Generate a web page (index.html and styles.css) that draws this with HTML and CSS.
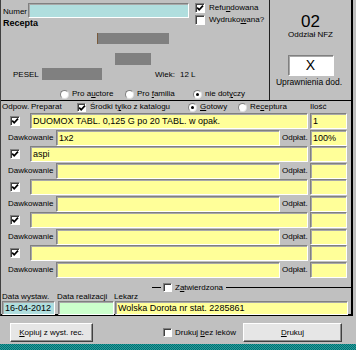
FILE: index.html
```html
<!DOCTYPE html>
<html lang="pl">
<head>
<meta charset="utf-8">
<title>Recepta</title>
<link rel="stylesheet" href="styles.css">
</head>
<body>
<div class="form">
  <div class="top">
    <div class="patient">
      <div class="numer-row"><span class="numer-lbl">Numer</span><span class="field cyan numer"></span></div>
      <div class="flags">
        <div class="cb-line"><span class="cb on"><svg viewBox="0 0 10 10"><path d="M2.2 4.6 L4.2 6.8 L8 2.6" /></svg></span><span>Refu<u>n</u>dowana</span></div>
        <div class="cb-line"><span class="cb"></span><span>Wydruko<u>w</u>ana?</span></div>
      </div>
      <div class="recepta">Recepta</div>
      <div class="redact r1"></div>
      <div class="redact r2"></div>
      <div class="pesel-row"><span class="pesel-lbl">PESEL</span><span class="redact r3"></span><span class="wiek">Wiek:</span><span class="wiek-val">12 L</span></div>
      <div class="radio-row">
        <span class="opt o1"><span class="rb"></span><span>Pro a<u>u</u>ctore</span></span>
        <span class="opt o2"><span class="rb"></span><span>Pro <u>f</u>amilia</span></span>
        <span class="opt o3"><span class="rb on"></span><span>nie dot<u>y</u>czy</span></span>
      </div>
    </div>
    <div class="nfz">
      <div class="nfz-num">02</div>
      <div class="nfz-lbl">Oddział NFZ</div>
      <div class="field white xbox">X</div>
      <div class="upr">Uprawnienia dod.</div>
    </div>
  </div>

  <div class="drug-head">
    <span class="h-odp">Odpow.</span>
    <span class="h-prep">Preparat</span>
    <span class="h-kat"><span class="cb on"><svg viewBox="0 0 10 10"><path d="M2.2 4.6 L4.2 6.8 L8 2.6" /></svg></span><span>Środki t<u>y</u>lko z katalogu</span></span>
    <span class="h-got"><span class="rb on"></span><span><u>G</u>otowy</span></span>
    <span class="h-rec"><span class="rb"></span><span>Re<u>c</u>eptura</span></span>
    <span class="h-il">Ilość</span>
  </div>

  <div class="drugs">
    <div class="pair">
      <div class="row-a"><span class="cbcell"><span class="cb on"><svg viewBox="0 0 10 10"><path d="M2.2 4.6 L4.2 6.8 L8 2.6" /></svg></span></span><span class="field yellow drug">DUOMOX TABL. 0,125 G po 20 TABL. w opak.</span><span class="field yellow qty">1</span></div>
      <div class="row-b"><span class="dlbl">Dawkowanie</span><span class="field yellow dawk">1x2</span><span class="odp">Odpłat.</span><span class="field yellow qty">100%</span></div>
    </div>
    <div class="pair">
      <div class="row-a"><span class="cbcell"><span class="cb on"><svg viewBox="0 0 10 10"><path d="M2.2 4.6 L4.2 6.8 L8 2.6" /></svg></span></span><span class="field yellow drug">aspi</span><span class="field yellow qty"></span></div>
      <div class="row-b"><span class="dlbl">Dawkowanie</span><span class="field yellow dawk"></span><span class="odp">Odpłat.</span><span class="field yellow qty"></span></div>
    </div>
    <div class="pair">
      <div class="row-a"><span class="cbcell"><span class="cb on"><svg viewBox="0 0 10 10"><path d="M2.2 4.6 L4.2 6.8 L8 2.6" /></svg></span></span><span class="field yellow drug"></span><span class="field yellow qty"></span></div>
      <div class="row-b"><span class="dlbl">Dawkowanie</span><span class="field yellow dawk"></span><span class="odp">Odpłat.</span><span class="field yellow qty"></span></div>
    </div>
    <div class="pair">
      <div class="row-a"><span class="cbcell"><span class="cb on"><svg viewBox="0 0 10 10"><path d="M2.2 4.6 L4.2 6.8 L8 2.6" /></svg></span></span><span class="field yellow drug"></span><span class="field yellow qty"></span></div>
      <div class="row-b"><span class="dlbl">Dawkowanie</span><span class="field yellow dawk"></span><span class="odp">Odpłat.</span><span class="field yellow qty"></span></div>
    </div>
    <div class="pair">
      <div class="row-a"><span class="cbcell"><span class="cb on"><svg viewBox="0 0 10 10"><path d="M2.2 4.6 L4.2 6.8 L8 2.6" /></svg></span></span><span class="field yellow drug"></span><span class="field yellow qty"></span></div>
      <div class="row-b"><span class="dlbl">Dawkowanie</span><span class="field yellow dawk"></span><span class="odp">Odpłat.</span><span class="field yellow qty"></span></div>
    </div>
  </div>

  <div class="zat">
    <span class="zline-l"></span><span class="cb"></span><span class="zat-lbl">Z<u>a</u>twierdzona</span><span class="zline-r"></span>
  </div>
  <div class="meta-labels">
    <span class="m1">Data wystaw.</span><span class="m2">Data realizacji</span><span class="m3">Lekarz</span>
  </div>
  <div class="meta-fields">
    <span class="field cyan f1">16-04-2012</span><span class="field green f2"></span><span class="field yellow f3">Wolska Dorota nr stat. 2285861</span>
  </div>
</div>

<div class="footer">
  <button class="btn b-copy" type="button"><u>K</u>opiuj z wyst. rec.</button>
  <span class="print-opt"><span class="cb"></span><span>Drukuj <u>b</u>ez leków</span></span>
  <button class="btn b-print" type="button"><u>D</u>rukuj</button>
</div>
<div class="strip"></div>
</body>
</html>
```

FILE: styles.css
```css
* { box-sizing: border-box; }

html, body {
  margin: 0;
  padding: 0;
}

body {
  width: 356px;
  height: 350px;
  overflow: hidden;
  background: #c0c0c0;
  font-family: "Liberation Sans", Arial, sans-serif;
  font-size: 8px;
  line-height: 10px;
  color: #000;
}

u { text-decoration: underline; text-underline-offset: 1px; }

/* ---------- generic controls ---------- */
.field {
  display: block;
  border: 1px solid;
  border-color: #808080 #ffffff #ffffff #808080;
  box-shadow: inset 1px 1px 0 #a8a8a8;
  font-size: 9px;
  line-height: 12px;
  padding: 1px 0 0 2px;
  white-space: nowrap;
  overflow: hidden;
}
.yellow { background: #ffff99; }
.cyan { background: #b0dede; }
.green { background: #ccffcc; }
.white { background: #ffffff; }

.cb {
  display: inline-block;
  flex: none;
  width: 10px;
  height: 10px;
  background: #fff;
  border: 1px solid;
  border-color: #808080 #ffffff #ffffff #808080;
  box-shadow: inset 1px 1px 0 #404040;
  position: relative;
}
.cb svg {
  display: block;
  width: 10px;
  height: 10px;
  margin: -1px 0 0 -1px;
}
.cb svg path {
  fill: none;
  stroke: #000;
  stroke-width: 1.7;
}

.rb {
  display: inline-block;
  flex: none;
  width: 9px;
  height: 9px;
  border-radius: 50%;
  background: #fff;
  border: 1px solid;
  border-color: #808080 #e0e0e0 #e0e0e0 #808080;
  position: relative;
}
.rb.on::after {
  content: "";
  position: absolute;
  left: 2px;
  top: 2px;
  width: 3px;
  height: 3px;
  border-radius: 50%;
  background: #000;
}

.redact { display: block; background: #808080; }

/* ---------- main form ---------- */
.form {
  width: 353px;
  height: 316px;
  border-left: 1px solid #404040;
  border-right: 2px solid #000;
  border-bottom: 2px solid #000;
  display: flex;
  flex-direction: column;
}

.top {
  display: flex;
  height: 101px;
  flex: none;
  border-bottom: 1px solid #000;
}

.patient {
  width: 268px;
  display: grid;
  grid-template-columns: 191px 77px;
  grid-template-rows: 15px 10px;
  align-content: start;
  padding-top: 3px;
}

.numer-row {
  grid-column: 1;
  grid-row: 1;
  display: flex;
  align-items: flex-end;
}
.numer-lbl { padding: 0 0 1px 2px; width: 27px; }
.numer { width: 161px; height: 15px; }

.flags {
  grid-column: 2;
  grid-row: 1 / 3;
  padding-left: 3px;
  display: flex;
  flex-direction: column;
  gap: 2px;
}
.cb-line { display: flex; align-items: center; gap: 4px; height: 10px; }

.recepta {
  grid-column: 1;
  grid-row: 2;
  font-weight: bold;
  font-size: 9px;
  line-height: 10px;
  padding-left: 2px;
}

.r1 { grid-column: 1 / -1; margin: 5px 0 0 96px; width: 72px; height: 11px; border-left: 1px solid #7a5a3a; }
.r2 { grid-column: 1 / -1; margin: 9px 0 0 114px; width: 36px; height: 12px; }

.pesel-row {
  grid-column: 1 / -1;
  margin-top: 3px;
  height: 12px;
  display: flex;
  align-items: flex-end;
}
.pesel-lbl { margin-left: 12px; width: 29px; }
.r3 { width: 60px; height: 12px; }
.wiek { margin-left: 53px; width: 25px; }

.radio-row {
  grid-column: 1 / -1;
  margin-top: 9px;
  display: flex;
  align-items: center;
  height: 10px;
}
.opt { display: flex; align-items: center; gap: 3px; }
.o1 { margin-left: 59px; width: 65px; }
.o2 { width: 68px; }

.nfz {
  flex: 1;
  border-left: 1px solid #202020;
  display: flex;
  flex-direction: column;
  align-items: center;
}
.nfz-num { font-size: 17px; line-height: 17px; margin-top: 13px; }
.nfz-lbl { line-height: 10px; }
.xbox {
  margin-top: 15px;
  width: 46px;
  height: 21px;
  font-size: 14px;
  line-height: 18px;
  text-align: center;
  padding: 0;
}
.upr { font-size: 8.5px; line-height: 10px; margin-top: 1px; margin-left: -3px; }

/* ---------- drugs ---------- */
.drug-head {
  flex: none;
  height: 12px;
  display: flex;
  align-items: center;
}
.drug-head > span { display: flex; align-items: center; }
.h-odp { width: 30px; padding-left: 1px; }
.h-prep { width: 46px; }
.h-kat { width: 111px; gap: 4px; }
.h-kat .cb { width: 9px; height: 9px; }
.h-got { width: 50px; gap: 3px; }
.h-rec { width: 72px; gap: 3px; }

.drugs { flex: none; }
.pair { height: 33px; }
.row-a, .row-b { display: flex; height: 16px; }
.row-b { margin-top: 1px; }

.cbcell { width: 29px; display: flex; align-items: center; padding-left: 9px; }
.drug { width: 278px; }
.row-a .qty { margin-left: 2px; }
.qty { width: 37px; }

.dlbl { width: 55px; padding-left: 7px; line-height: 15px; }
.dawk { width: 224px; }
.odp { width: 29px; padding-left: 2px; line-height: 15px; margin-right: 1px; }

/* ---------- bottom group ---------- */
.zat {
  flex: none;
  margin-top: 5px;
  height: 9px;
  display: flex;
  align-items: center;
}
.zat .cb { width: 9px; height: 9px; }
.zline-l { margin-left: 151px; width: 9px; height: 1px; background: #000; }
.zline-l + .cb { margin-left: 2px; }
.zat-lbl { margin-left: 3px; }
.zline-r { flex: 1; height: 1px; background: #000; margin-left: 3px; }

.meta-labels {
  flex: none;
  height: 9px;
  display: flex;
  line-height: 9px;
}
.m1 { width: 56px; padding-left: 1px; }
.m2 { width: 57px; }

.meta-fields {
  flex: 1;
  display: flex;
  padding-left: 1px;
}
.meta-fields .field { line-height: 11px; padding-top: 1px; }
.f1 { width: 53px; }
.f2 { width: 56px; margin-left: 3px; }
.f3 { width: 233px; margin-left: 1px; }

/* ---------- footer ---------- */
.footer {
  height: 28px;
  display: flex;
  align-items: flex-start;
  padding-top: 7px;
}
.btn {
  height: 19px;
  margin: 0;
  padding: 0;
  background: #e6e6e6;
  border: 1px solid;
  border-color: #ffffff #404040 #404040 #ffffff;
  box-shadow: inset -1px -1px 0 #909090;
  font-family: "Liberation Sans", Arial, sans-serif;
  font-size: 8px;
  color: #000;
}
.b-copy { margin-left: 10px; width: 83px; }
.print-opt {
  display: flex;
  align-items: center;
  gap: 3px;
  margin-left: 70px;
  height: 19px;
}
.print-opt .cb { width: 9px; height: 9px; }
.b-print { margin-left: auto; margin-right: 14px; width: 99px; }

.strip {
  height: 6px;
  background-color: #008080;
  background-image: repeating-conic-gradient(#2a9c9c 0 25%, #007070 0 50%);
  background-size: 2px 2px;
}
```
